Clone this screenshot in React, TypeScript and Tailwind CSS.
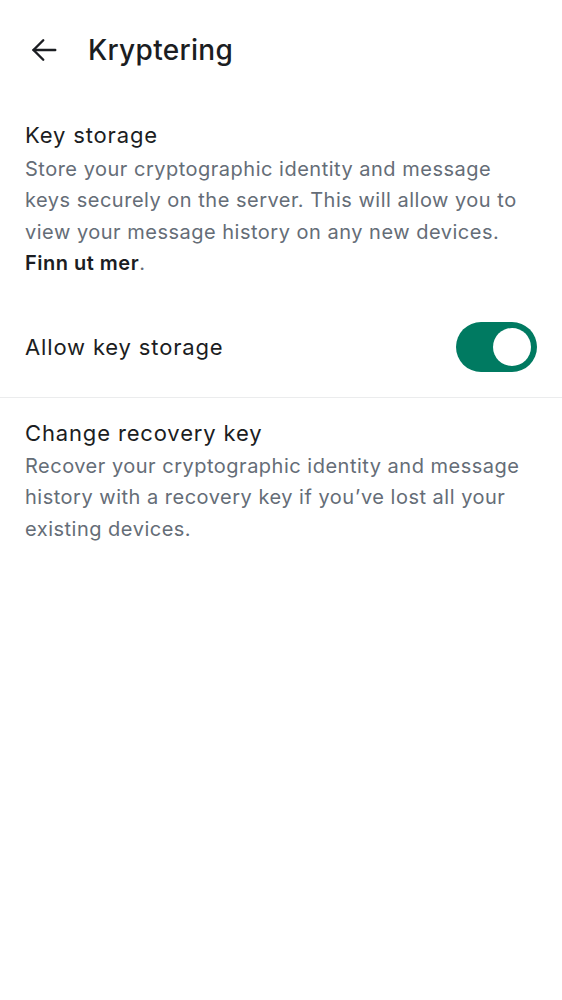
import React from "react";

export default function App() {
  const font = { fontFamily: "Inter, 'Noto Sans', sans-serif" };
  return (
    <div className="w-[562px] h-[1000px] bg-white text-[#1b1d22]" style={font}>
      <div className="flex items-center h-[100px] pl-[26px]">
        <svg width="36" height="36" viewBox="0 0 24 24" fill="none" stroke="#1b1d22" strokeWidth="1.6" strokeLinecap="round" strokeLinejoin="round">
          <path d="M19.5 12H5" />
          <path d="M11.5 5.5L5 12l6.5 6.5" />
        </svg>
        <div className="ml-[26px] text-[28px] font-medium leading-[36px] tracking-[0.3px]">Kryptering</div>
      </div>
      <div className="px-[25px] pt-[20px]">
        <div className="text-[22px] leading-[30px] tracking-[0.85px]">Key storage</div>
        <div className="mt-[4px] text-[20px] leading-[31.3px] tracking-[0.5px] text-[#656d77]">
          Store your cryptographic identity and message keys securely on the server. This will allow you to view your message history on any new devices.{" "}
          <span className="font-semibold text-[#1b1d22]">Finn ut mer</span>.
        </div>
      </div>
      <div className="flex items-center justify-between pl-[25px] pr-[25px] mt-[43px] h-[50px]">
        <div className="text-[22px] leading-[30px] tracking-[0.85px]">Allow key storage</div>
        <div className="w-[81px] h-[50px] rounded-full bg-[#007a61] flex items-center justify-end pr-[6px]">
          <div className="w-[38px] h-[38px] rounded-full bg-white" />
        </div>
      </div>
      <div className="mt-[25px] h-px bg-[#ebeced]" />
      <div className="px-[25px] pt-[20px]">
        <div className="text-[22px] leading-[30px] tracking-[0.85px]">Change recovery key</div>
        <div className="mt-[3px] text-[20px] leading-[31.3px] tracking-[0.5px] text-[#656d77]">
          Recover your cryptographic identity and message history with a recovery key if you’ve lost all your existing devices.
        </div>
      </div>
    </div>
  );
}
